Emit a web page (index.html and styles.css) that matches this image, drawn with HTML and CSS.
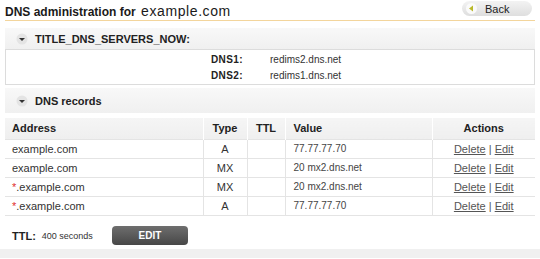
FILE: index.html
```html
<!DOCTYPE html>
<html lang="en">
<head>
  <meta charset="UTF-8">
  <title>DNS administration</title>
  <link rel="stylesheet" href="styles.css">
</head>
<body>
<div class="page">
  <div class="head">
    <h1>DNS administration for <span class="domain">example.com</span></h1>
    <a class="back" href="#">
      <span class="back-ico">
        <svg width="9" height="9" viewBox="0 0 9 9"><polygon points="6,1.5 6,7.5 2,4.5" fill="#b9b92a"/></svg>
      </span>
      Back
    </a>
  </div>

  <div class="sect">
    <svg class="toggle" width="12" height="12" viewBox="0 0 12 12"><circle cx="6" cy="6" r="5.5" fill="#e4e4e4"/><polygon points="3,5 9,5 6,8" fill="#333"/></svg>
    <span>TITLE_DNS_SERVERS_NOW:</span>
  </div>
  <div class="servers">
    <div class="srv"><b>DNS1:</b><span>redims2.dns.net</span></div>
    <div class="srv"><b>DNS2:</b><span>redims1.dns.net</span></div>
  </div>

  <div class="sect sect2">
    <svg class="toggle" width="12" height="12" viewBox="0 0 12 12"><circle cx="6" cy="6" r="5.5" fill="#e4e4e4"/><polygon points="3,5 9,5 6,8" fill="#333"/></svg>
    <span>DNS records</span>
  </div>

  <table class="records">
    <thead>
      <tr>
        <th class="c-addr">Address</th>
        <th class="c-type">Type</th>
        <th class="c-ttl">TTL</th>
        <th class="c-val">Value</th>
        <th class="c-act">Actions</th>
      </tr>
    </thead>
    <tbody>
      <tr>
        <td class="c-addr">example.com</td>
        <td class="c-type">A</td>
        <td class="c-ttl"></td>
        <td class="c-val">77.77.77.70</td>
        <td class="c-act"><a href="#">Delete</a> | <a href="#">Edit</a></td>
      </tr>
      <tr>
        <td class="c-addr">example.com</td>
        <td class="c-type">MX</td>
        <td class="c-ttl"></td>
        <td class="c-val">20 mx2.dns.net</td>
        <td class="c-act"><a href="#">Delete</a> | <a href="#">Edit</a></td>
      </tr>
      <tr>
        <td class="c-addr"><span class="star">*</span>.example.com</td>
        <td class="c-type">MX</td>
        <td class="c-ttl"></td>
        <td class="c-val">20 mx2.dns.net</td>
        <td class="c-act"><a href="#">Delete</a> | <a href="#">Edit</a></td>
      </tr>
      <tr>
        <td class="c-addr"><span class="star">*</span>.example.com</td>
        <td class="c-type">A</td>
        <td class="c-ttl"></td>
        <td class="c-val">77.77.77.70</td>
        <td class="c-act"><a href="#">Delete</a> | <a href="#">Edit</a></td>
      </tr>
    </tbody>
  </table>

  <div class="ttl">
    <b>TTL:</b>
    <span class="ttl-val">400 seconds</span>
    <a class="btn" href="#">EDIT</a>
  </div>
</div>
<div class="foot"></div>
</body>
</html>
```

FILE: styles.css
```css
*{margin:0;padding:0;box-sizing:border-box;}
body{font-family:"Liberation Sans",Arial,sans-serif;font-size:11px;color:#222;background:#fff;}
a{color:inherit;}

.page{padding:0 5px;}

.head{
  display:flex;
  align-items:center;
  justify-content:space-between;
  height:21px;
  border-bottom:1px solid #f3d59c;
}
.head h1{font-size:12px;font-weight:bold;color:#1a1a1a;padding-top:1px;}
.head .domain{font-size:14px;font-weight:normal;letter-spacing:0.6px;margin-left:2px;}

.back{
  display:flex;
  align-items:center;
  gap:8px;
  width:70px;
  height:15px;
  margin-right:3px;
  margin-bottom:3px;
  padding-left:4px;
  border-radius:8px;
  background:linear-gradient(#f3f3f3,#dedede);
  text-decoration:none;
  font-size:11px;
  color:#222;
}
.back-ico{
  display:flex;
  align-items:center;
  justify-content:center;
  width:11px;
  height:11px;
  border-radius:50%;
  background:#fafafa;
}

.sect{
  display:flex;
  align-items:center;
  gap:7px;
  height:21px;
  margin-top:7px;
  padding-left:11px;
  background:linear-gradient(#f8f8f8,#f0f0f0);
  font-weight:bold;
  font-size:11px;
}
.sect2{margin-top:3px;height:25px;}

.servers{
  background:#fff;
  border:1px solid #dcdcdc;
  padding:1px 0 1px 205px;
}
.srv{display:flex;height:16px;align-items:center;font-size:10px;}
.srv b{width:59px;letter-spacing:0.4px;}
.srv span{color:#333;}

.records{
  width:100%;
  margin-top:5px;
  border-collapse:collapse;
  font-size:11px;
}
.records th{
  height:21px;
  padding:0;
  background:linear-gradient(#f5f5f5,#efefef);
  font-weight:bold;
  border-right:1px solid #fff;
}
.records td{
  height:19px;
  padding-top:0;
  padding-bottom:0;
  border:1px solid #e4e4e4;
  color:#333;
}
.records tr td:first-child{border-left:none;}
.records tr td:last-child,.records th:last-child{border-right:none;}
.records .c-addr{width:198px;text-align:left;padding-left:7px;}
.c-type{width:44px;text-align:center;}
.c-ttl{width:38px;text-align:center;}
.records .c-val{width:147px;text-align:left;padding-left:8px;}
.c-act{text-align:center;}
.records td.c-act{color:#555;}
.records td.c-val{color:#444;font-size:10px;}
.star{color:#e03030;}

.ttl{
  display:flex;
  align-items:center;
  height:20px;
  margin-top:10px;
  padding-left:7px;
  font-size:9px;
}
.ttl b{font-size:11px;margin-right:6px;}
.ttl-val{color:#333;}
.btn{
  display:flex;
  align-items:center;
  justify-content:center;
  width:76px;
  height:19px;
  margin-left:19px;
  border-radius:4px;
  background:linear-gradient(#6e6e6e,#474747);
  color:#fff;
  font-weight:bold;
  font-size:10px;
  text-decoration:none;
}

.foot{height:9px;margin-top:3px;background:#f0f0f0;}
```
